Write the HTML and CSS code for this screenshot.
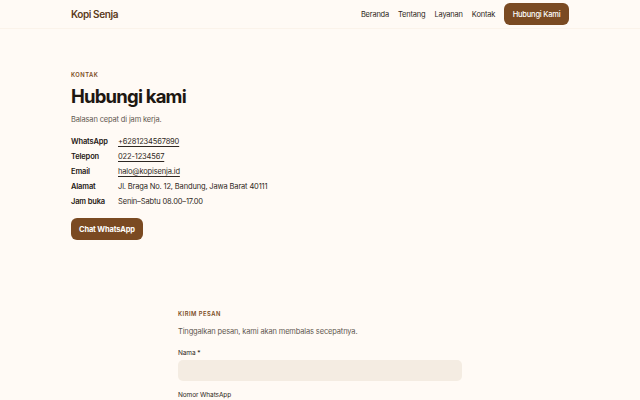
FILE: index.html
```html
<!DOCTYPE html>
<html lang="id">
<head>
    <meta charset="UTF-8">
    <title>Kontak - Kopi Senja</title>
    <meta name="viewport" content="width=device-width, initial-scale=1.0">
    <link rel="stylesheet" href="styles.css">
</head>
<body>
    <header class="site-header">
        <div class="wrap header-inner">
            <a href="#" class="logo">Kopi Senja</a>
            <nav class="nav">
                <a href="#">Beranda</a>
                <a href="#">Tentang</a>
                <a href="#">Layanan</a>
                <a href="#">Kontak</a>
                <a href="#" class="btn btn-nav">Hubungi Kami</a>
            </nav>
        </div>
    </header>

    <main>
        <section class="wrap contact">
            <p class="eyebrow">Kontak</p>
            <h1>Hubungi kami</h1>
            <p class="lead">Balasan cepat di jam kerja.</p>

            <dl class="info">
                <dt>WhatsApp</dt>
                <dd><a href="#">+6281234567890</a></dd>
                <dt>Telepon</dt>
                <dd><a href="#">022-1234567</a></dd>
                <dt>Email</dt>
                <dd><a href="#">halo@kopisenja.id</a></dd>
                <dt>Alamat</dt>
                <dd>Jl. Braga No. 12, Bandung, Jawa Barat 40111</dd>
                <dt>Jam buka</dt>
                <dd>Senin–Sabtu 08.00–17.00</dd>
            </dl>

            <a href="#" class="btn btn-chat">Chat WhatsApp</a>
        </section>

        <section class="message">
            <p class="eyebrow">Kirim pesan</p>
            <p class="lead">Tinggalkan pesan, kami akan membalas secepatnya.</p>

            <form class="form">
                <label class="field">
                    <span>Nama *</span>
                    <input type="text">
                </label>
                <label class="field">
                    <span>Nomor WhatsApp</span>
                    <input type="text">
                </label>
            </form>
        </section>
    </main>
</body>
</html>
```

FILE: styles.css
```css
:root {
    --bg: #fffaf5;
    --brown: #7a4a22;
    --brown-dark: #5b3a20;
    --ink: #1d1712;
    --muted: #5f5850;
    --field-bg: #f4ece2;
}

* {
    box-sizing: border-box;
}

body {
    background: var(--bg);
    color: var(--ink);
    font-family: Inter, 'Noto Sans', sans-serif;
    margin: 0;
}

a {
    color: inherit;
    text-decoration: none;
}

.wrap {
    width: 498px;
    margin: 0 auto;
}

/* header */
.site-header {
    border-bottom: 1px solid #fbf3ea;
}

.header-inner {
    display: flex;
    align-items: center;
    justify-content: space-between;
    height: 28px;
}

.logo {
    color: var(--brown-dark);
    font-size: 10px;
    font-weight: 600;
    letter-spacing: -0.4px;
}

.nav {
    display: flex;
    align-items: center;
    gap: 9px;
    font-size: 7.5px;
    letter-spacing: -0.2px;
    color: #2e2722;
}

.btn {
    display: inline-flex;
    align-items: center;
    justify-content: center;
    background: var(--brown);
    color: #fff;
    border-radius: 6px;
    font-weight: 600;
}

.btn-nav {
    height: 22px;
    padding: 0 8.5px;
    font-size: 7.5px;
    font-weight: 500;
}

/* contact block */
.contact {
    padding-top: 42px;
}

.eyebrow {
    margin: 0;
    color: var(--brown);
    font-size: 5.8px;
    font-weight: 600;
    letter-spacing: 0.5px;
    text-transform: uppercase;
}

h1 {
    margin: 6px 0 0;
    font-size: 18.5px;
    font-weight: 700;
    letter-spacing: -0.8px;
    line-height: 1.3;
}

.lead {
    margin: 7px 0 0;
    color: var(--muted);
    font-size: 7.5px;
    letter-spacing: -0.15px;
}

.info {
    display: grid;
    grid-template-columns: 47px auto;
    row-gap: 5px;
    margin: 13px 0 0;
    font-size: 7.5px;
    letter-spacing: -0.15px;
    line-height: 10px;
}

.info dt {
    font-weight: 600;
}

.info dd {
    margin: 0;
    color: #2e2722;
}

.info a {
    text-decoration: underline;
    text-underline-offset: 1.5px;
}

.btn-chat {
    height: 22px;
    padding: 0 8px;
    margin-top: 11px;
    font-size: 7.5px;
    font-weight: 700;
    letter-spacing: -0.15px;
}

/* message form */
.message {
    width: 284px;
    margin: 70px auto 0;
}

.message .lead {
    margin-top: 10px;
}

.form {
    margin-top: 13px;
    display: flex;
    flex-direction: column;
    gap: 10px;
}

.field {
    display: flex;
    flex-direction: column;
    gap: 3px;
    font-size: 6.5px;
    letter-spacing: -0.1px;
    color: #2e2722;
}

.field input {
    height: 21px;
    border: none;
    border-radius: 5px;
    background: var(--field-bg);
    outline: none;
}
```
